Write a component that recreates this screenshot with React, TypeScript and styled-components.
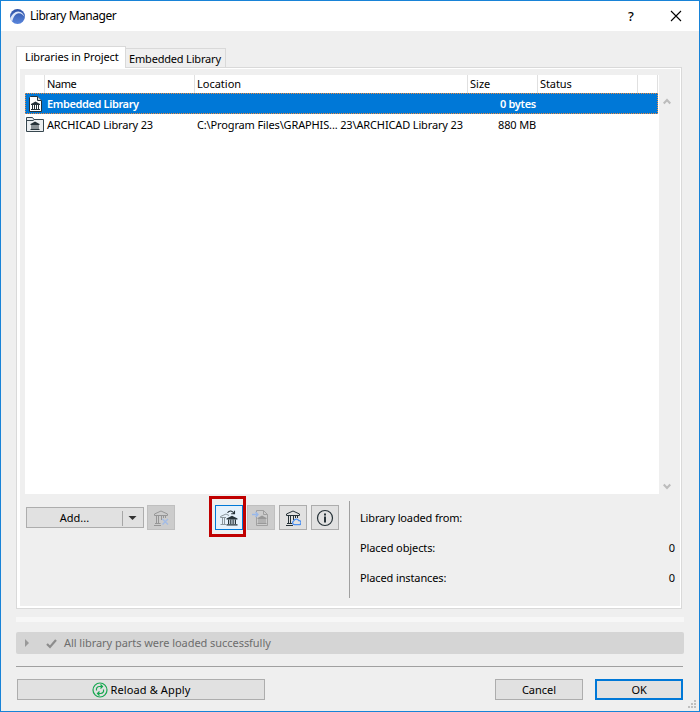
import React from "react";
import styled, { createGlobalStyle, css } from "styled-components";

const Global = createGlobalStyle`
  * { box-sizing: border-box; }
  body { margin: 0; overflow: hidden; background: #f0f0f0; }
  button { font: inherit; color: inherit; letter-spacing: inherit; padding: 0; margin: 0; }
`;

const Window = styled.div`
  width: 700px;
  height: 712px;
  border: 1px solid #1883d7;
  background: #efefef;
  color: #000;
  font: 11px/20px "Noto Sans", "Open Sans", sans-serif;
  display: flex;
  flex-direction: column;
  position: relative;
  white-space: nowrap;
`;

const Label = styled.span<{ $ls?: number; $bold?: boolean }>`
  letter-spacing: ${(p) => p.$ls ?? 0}px;
  font-weight: ${(p) => (p.$bold ? 600 : 400)};
`;

const TitleBar = styled.header`
  height: 30px;
  flex: none;
  background: #fff;
  display: flex;
  align-items: center;
  padding: 0 17px 0 8px;
  font-size: 12px;
`;

const Title = styled.h1`
  font: inherit;
  margin: 0 auto 0 4px;
  letter-spacing: -0.47px;
`;

const TitleButton = styled.button`
  border: 0;
  background: none;
  width: 12px;
  height: 20px;
  display: grid;
  place-items: center;
  margin-left: 33px;
  font-size: 13px;
  font-weight: 500;
`;

const TabStrip = styled.nav`
  height: 20px;
  flex: none;
  margin: 16px 0 0 15px;
  display: flex;
  align-items: flex-end;
`;

const Tab = styled.div<{ $active?: boolean }>`
  border: 1px solid #d9d9d9;
  border-bottom: 0;
  ${(p) =>
    p.$active
      ? css`
          width: 110px;
          height: 22px;
          margin-bottom: -1px;
          background: #fff;
          padding: 0 0 0 8px;
        `
      : css`
          width: 100px;
          height: 19px;
          border-left: 0;
          padding: 0 0 0 3px;
        `}
  position: relative;
  z-index: 1;
`;

const Panel = styled.section`
  width: 666px;
  height: 542px;
  flex: none;
  margin-left: 15px;
  border: 1px solid #d9d9d9;
  background: #efefef;
  box-shadow: inset 3px 0 #fff, inset 0 1px #fff, inset -1px 0 #fff, inset 0 -2px #fff;
  padding: 7px 0 0 8px;
`;

const ListArea = styled.div`
  display: flex;
  height: 419px;
`;

const List = styled.div`
  width: 634px;
  background: #fff;
`;

const Scroll = styled.div`
  width: 15px;
  display: flex;
  flex-direction: column;
  justify-content: space-between;
  align-items: center;
  padding: 23px 0 4px;
`;

const HeaderRow = styled.div`
  width: 633px;
  height: 18px;
  display: grid;
  grid-template-columns: 20px 150px 273px 70px 100px 20px;
  line-height: 18px;
`;

const HeaderCell = styled.div`
  border-right: 1px solid #e0e0e0;
  padding-left: 2px;
`;

const dots = (deg: number) =>
  `repeating-linear-gradient(${deg}deg, #f08a3c 0 1px, #0078d7 1px 2px)`;

const Row = styled.div<{ $selected?: boolean }>`
  width: 633px;
  height: 21px;
  display: grid;
  grid-template-columns: 22px 150px 273px 66px;
  line-height: 21px;
  ${(p) =>
    p.$selected &&
    css`
      color: #fff;
      background:
        ${dots(90)} top / 100% 1px no-repeat,
        ${dots(90)} bottom / 100% 1px no-repeat,
        ${dots(180)} left / 1px 100% no-repeat,
        ${dots(180)} right / 1px 100% no-repeat,
        #0078d7;
    `}
`;

const IconCell = styled.div<{ $indent: number }>`
  display: flex;
  align-items: center;
  padding-left: ${(p) => p.$indent}px;
`;

const SizeCell = styled.div`
  text-align: right;
`;

const Controls = styled.div`
  display: flex;
  align-items: flex-start;
  padding: 7px 0 0 1px;
`;

const Tools = styled.div`
  display: flex;
  align-items: center;
  padding-top: 4px;
`;

const AddButton = styled.div`
  width: 118px;
  height: 21px;
  border: 1px solid #adadad;
  background: #e1e1e1;
  display: grid;
  grid-template-columns: 95px 1px 20px;
  align-items: center;
  margin-right: 3px;
  text-align: center;
`;

const Separator = styled.i`
  height: 15px;
  background: #a6a6a6;
`;

const ToolButton = styled.button<{ $state?: "disabled" | "hot"; $gap?: number }>`
  width: 28px;
  height: 25px;
  margin-right: ${(p) => p.$gap ?? 4}px;
  display: grid;
  place-items: center;
  border: 1px solid ${(p) => (p.$state === "hot" ? "#0078d7" : p.$state === "disabled" ? "#bfbfbf" : "#adadad")};
  background: ${(p) => (p.$state === "hot" ? "#e5f1fb" : p.$state === "disabled" ? "#cccccc" : "#e1e1e1")};
  position: relative;
`;

const Highlight = styled.i`
  position: absolute;
  left: -7px;
  top: -10px;
  width: 37px;
  height: 41px;
  border: 3px solid #c00000;
`;

const Info = styled.dl`
  margin: 0 0 0 10px;
  width: 326px;
  height: 97px;
  border-left: 1px solid #a0a0a0;
  padding: 2px 0 0 10px;
`;

const InfoRow = styled.div`
  display: flex;
  justify-content: space-between;
  height: 30px;
  line-height: 30px;
`;

const Strip = styled.div`
  height: 5px;
  flex: none;
  margin: 8px 15px 10px;
  background: #f7f7f7;
`;

const StatusBar = styled.div`
  height: 22px;
  flex: none;
  margin: 0 15px;
  background: #d5d5d5;
  border-radius: 2px;
  color: #6d6d6d;
  display: flex;
  align-items: center;
  padding-left: 8px;
`;

const Footer = styled.footer`
  margin: 12px 16px 0 15px;
  border-top: 1px solid #a0a0a0;
  padding: 12px 0 0 1px;
  display: flex;
`;

const PushButton = styled.button<{ $w: number; $default?: boolean; $push?: boolean }>`
  width: ${(p) => p.$w}px;
  height: 21px;
  border: ${(p) => (p.$default ? "2px solid #0078d7" : "1px solid #adadad")};
  background: #e1e1e1;
  display: flex;
  align-items: center;
  justify-content: center;
  gap: 3px;
  margin-left: ${(p) => (p.$push ? "auto" : p.$default ? "12px" : "0")};
`;

const Grip = styled.svg`
  position: absolute;
  right: 2px;
  bottom: 2px;
`;

const Temple = ({ x = 0, y = 0, c = "#263238" }: { x?: number; y?: number; c?: string }) => (
  <g transform={`translate(${x} ${y})`} fill={c}>
    <path d="M0 2.600L4.500 0L9 2.600V3.500H0z" />
    <path d="M1 3.500h1v4H1zM3 3.500h1v4H3zM5 3.500h1v4H5zM7 3.500h1v4H7zM0 7.500h9v1H0z" />
  </g>
);

const OutlineTemple = ({ c }: { c: string }) => (
  <g fill="none" stroke={c}>
    <path d="M1.500 4L8 1L14.500 4V5.500H1.500Z" />
    <path d="M3.500 6V13M5.500 6V13M8.500 6V10M10.500 6V8M12.500 6V8M2 13.500H7.500M1 15.500H8" />
  </g>
);

const Logo = () => (
  <svg width="17" height="17" viewBox="0 0 17 17">
    <defs>
      <linearGradient id="sphere" x1="0" y1="0" x2="0" y2="1">
        <stop offset="0" stopColor="#2c50a4" />
        <stop offset="1" stopColor="#5a86dc" />
      </linearGradient>
    </defs>
    <circle cx="8.500" cy="8.500" r="7.500" fill="url(#sphere)" />
    <path
      d="M1.200 10.500C3 6.500 5.800 3.600 9.200 3.600C12.300 3.600 14.500 6 15.900 9.200C14.300 7 12.500 5.200 9.800 5.200C6.500 5.200 4.200 9 3.200 13.600C2.200 12.800 1.500 11.700 1.200 10.500z"
      fill="#dbe5f8"
    />
  </svg>
);

const FileIcon = () => (
  <svg width="13" height="16" viewBox="0 0 13 16">
    <path d="M.5 1.500l1-1H8.500l4 4v11H.5z" fill="#fff" stroke="#263238" />
    <path d="M8.500.5v4h4" fill="#cfd8dc" stroke="#263238" />
    <Temple x={2} y={5.5} />
  </svg>
);

const FolderIcon = () => (
  <svg width="18" height="15" viewBox="0 0 18 15">
    <path d="M.5 14.500V.5h6l1.500 2h9.500v12z" fill="#eceff1" stroke="#37474f" />
    <path d="M.5 3.500H7l1.500-1" fill="none" stroke="#37474f" />
    <Temple x={4.5} y={4.5} />
  </svg>
);

const ChevronIcon = ({ down }: { down?: boolean }) => (
  <svg width="8" height="7" viewBox="0 0 8 7">
    <path d={down ? "M.7 1.500L4 5 7.300 1.500" : "M.7 5.500L4 2 7.300 5.500"} fill="none" stroke="#bcbcbc" strokeWidth="2.200" />
  </svg>
);

const RemoveIcon = () => (
  <svg width="16" height="16" viewBox="0 0 16 16">
    <OutlineTemple c="#969696" />
    <path d="M9.500 9l5.500 5.500M15 9l-5.500 5.500" stroke="#a3bce6" strokeWidth="1.400" />
  </svg>
);

const EmbedIcon = () => (
  <svg width="18" height="18" viewBox="0 0 18 18">
    <path d="M.5 8.500V7.500L6 5L9 6.500M.5 8.500H6M2.500 9v6M4.500 9v6M.5 15.500H6" fill="none" stroke="#8a959b" />
    <g fill="#263238">
      <path d="M6.500 9.600L12 6.800L17.500 9.600V10.600H6.500z" />
      <path d="M8 10.600h1.200V15H8zM10.200 10.600h1.200V15h-1.200zM12.500 10.600h1.200V15h-1.200zM14.800 10.600H16V15h-1.200zM6.500 15.200h11v1.300h-11z" />
    </g>
    <path d="M7.500 3.800C9.500 1 12.500 1.500 14.200 4.800M11.200 4.800h3.300V1.800" fill="none" stroke="#263238" strokeWidth="1.100" />
  </svg>
);

const ImportIcon = () => (
  <svg width="18" height="18" viewBox="0 0 18 18">
    <path d="M4.500 3V1.500H11.500L15.500 5.500V16.500H4.500V8M11.500 1.500V5.500H15.500" fill="none" stroke="#a1a1a1" />
    <Temple x={5.5} y={6.5} c="#989898" />
    <path d="M0 5.500H6M3.500 3L6 5.500L3.500 8" fill="none" stroke="#98b8ea" strokeWidth="1.300" />
  </svg>
);

const CloudIcon = () => (
  <svg width="16" height="16" viewBox="0 0 16 16">
    <OutlineTemple c="#263238" />
    <path
      d="M9.300 14.700a2 2 0 0 1-.7-3.700a2.900 2.900 0 0 1 5.200-.4a2 2 0 0 1 .3 4.100z"
      fill="#e1e1e1"
      stroke="#4b8ff0"
      strokeWidth="1.300"
    />
  </svg>
);

const InfoIcon = () => (
  <svg width="18" height="18" viewBox="0 0 18 18">
    <circle cx="9" cy="9" r="7.500" fill="none" stroke="#263238" strokeWidth="1.200" />
    <path d="M8 4.500h2v2H8zM8 7.500h2v6H8z" fill="#263238" />
  </svg>
);

const ReloadIcon = () => (
  <svg width="16" height="16" viewBox="0 0 16 16">
    <g fill="none" stroke="#16a750" strokeWidth="1.200">
      <circle cx="8" cy="8" r="7" />
      <path d="M4.500 8.500C4 6 5.200 4.500 7.500 4.500H10.500M8.500 2.500l2 2-2 2M11.500 7.500c.5 2.500-.7 4-3 4H5.500M7.500 9.500l-2 2 2 2" />
    </g>
  </svg>
);

export default function App() {
  return (
    <Window>
      <Global />
      <TitleBar>
        <Logo />
        <Title>Library Manager</Title>
        <TitleButton>?</TitleButton>
        <TitleButton>
          <svg width="12" height="12" viewBox="0 0 12 12">
            <path d="M1 1l10 10M11 1L1 11" stroke="#000" strokeWidth="1.100" />
          </svg>
        </TitleButton>
      </TitleBar>
      <TabStrip>
        <Tab $active><Label $ls={-0.12}>Libraries in Project</Label></Tab>
        <Tab><Label $ls={-0.18}>Embedded Library</Label></Tab>
      </TabStrip>
      <Panel>
        <ListArea>
          <List>
            <HeaderRow>
              <HeaderCell />
              <HeaderCell><Label $ls={-0.4}>Name</Label></HeaderCell>
              <HeaderCell><Label>Location</Label></HeaderCell>
              <HeaderCell><Label>Size</Label></HeaderCell>
              <HeaderCell><Label $ls={-0.1}>Status</Label></HeaderCell>
              <HeaderCell />
            </HeaderRow>
            <Row $selected>
              <IconCell $indent={4}><FileIcon /></IconCell>
              <Label $bold $ls={-0.38}>Embedded Library</Label>
              <span />
              <SizeCell><Label $bold $ls={-0.3}>0 bytes</Label></SizeCell>
            </Row>
            <Row>
              <IconCell $indent={1}><FolderIcon /></IconCell>
              <Label $ls={-0.16}>ARCHICAD Library 23</Label>
              <Label $ls={-0.14}>C:\Program Files\GRAPHIS... 23\ARCHICAD Library 23</Label>
              <SizeCell><Label $ls={-0.15}>880 MB</Label></SizeCell>
            </Row>
          </List>
          <Scroll>
            <ChevronIcon />
            <ChevronIcon down />
          </Scroll>
        </ListArea>
        <Controls>
          <Tools>
            <AddButton>
              <Label>Add...</Label>
              <Separator />
              <svg width="20" height="6" viewBox="0 0 20 6"><path d="M5.500 1h8l-4 4z" fill="#333" /></svg>
            </AddButton>
            <ToolButton $state="disabled" $gap={40}><RemoveIcon /></ToolButton>
            <ToolButton $state="hot"><EmbedIcon /><Highlight /></ToolButton>
            <ToolButton $state="disabled"><ImportIcon /></ToolButton>
            <ToolButton><CloudIcon /></ToolButton>
            <ToolButton $gap={0}><InfoIcon /></ToolButton>
          </Tools>
          <Info>
            <InfoRow><Label $ls={-0.15}>Library loaded from:</Label></InfoRow>
            <InfoRow><Label $ls={-0.1}>Placed objects:</Label><Label>0</Label></InfoRow>
            <InfoRow><Label $ls={-0.12}>Placed instances:</Label><Label>0</Label></InfoRow>
          </Info>
        </Controls>
      </Panel>
      <Strip />
      <StatusBar>
        <svg width="40" height="14" viewBox="0 0 40 14">
          <path d="M1 3v8l4-4z" fill="#999" />
          <path d="M23 8l3 3 6-7" fill="none" stroke="#8c8c8c" strokeWidth="2.200" />
        </svg>
        <Label $ls={-0.05}>All library parts were loaded successfully</Label>
      </StatusBar>
      <Footer>
        <PushButton $w={248}><ReloadIcon /><Label $ls={0.12}>Reload &amp; Apply</Label></PushButton>
        <PushButton $w={88} $push><Label>Cancel</Label></PushButton>
        <PushButton $w={88} $default><Label $ls={-0.2}>OK</Label></PushButton>
      </Footer>
      <Grip width="9" height="9" viewBox="0 0 9 9">
        <path d="M6 0h2v2H6zM3 3h2v2H3zM6 3h2v2H6zM0 6h2v2H0zM3 6h2v2H3zM6 6h2v2H6z" fill="#bfbfbf" />
      </Grip>
    </Window>
  );
}
